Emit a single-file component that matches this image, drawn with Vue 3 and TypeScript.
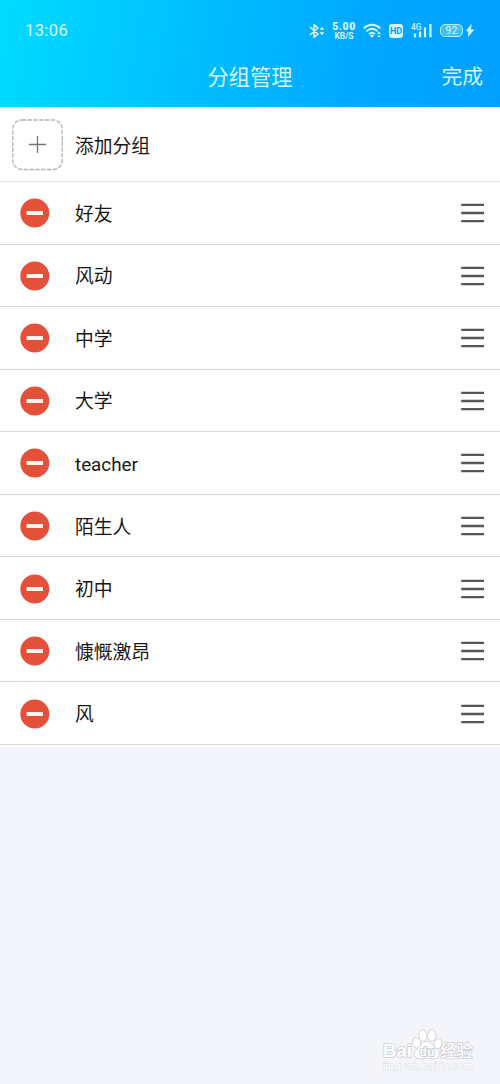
<script setup lang="ts">
interface Group {
  id: number
  name: string
}

const groups: Group[] = [
  '好友', '风动', '中学', '大学', 'teacher', '陌生人', '初中', '慷慨激昂', '风',
].map((name, id) => ({ id, name }))
</script>

<template>
  <main class="screen">
    <header class="header">
      <div class="status">
        <span class="clock">13:06</span>
        <div class="indicators">
          <svg class="bluetooth" width="17" height="16" viewBox="0 0 17 16">
            <path d="M1 4.2 9 11 5.1 14.3V1.7L9 5 1 11.8" fill="none" stroke="currentColor" stroke-width="1.6" stroke-linejoin="round" />
            <path d="m13 3.8 2.3 2.9h-4.6zM13 12.2l2.3-2.900h-4.600z" fill="currentColor" />
          </svg>
          <span class="speed"><b>5.00</b><small>KB/S</small></span>
          <svg class="wifi" width="20" height="16" viewBox="0 0 20 16">
            <path d="M.7 5.300Q9 -1.700 17.300 5.300M3.400 8.200Q9 3.500 14.600 8.200M6 11Q9 8.500 12 11" fill="none" stroke="currentColor" stroke-width="1.9" />
            <path d="M6.800 12.400Q9 11 11.200 12.400L9 14.800zM16 8.500l2 2.400h-4zM16 14.800l2-2.400h-4z" fill="currentColor" />
          </svg>
          <span class="hd">HD</span>
          <svg class="signal" width="22" height="17" viewBox="0 0 22 17">
            <text x="0" y="7.600" class="network" textLength="10.500" lengthAdjust="spacingAndGlyphs">4G</text>
            <path d="M4 11.500v3.700M9 9.500v5.700M14 5.500v9.700M19.400 2v13.200" fill="none" stroke="currentColor" stroke-width="2.200" />
          </svg>
          <span class="battery">92</span>
          <svg class="bolt" width="10" height="15" viewBox="0 0 10 15">
            <path d="M6.500.7.600 8.200h3L2.800 14.300 9.400 6.400H6z" fill="currentColor" />
          </svg>
        </div>
      </div>
      <nav class="titlebar">
        <span />
        <h1>分组管理</h1>
        <button type="button">完成</button>
      </nav>
    </header>

    <section class="add">
      <svg class="add-icon" width="52" height="52" viewBox="0 0 52 52">
        <rect x=".8" y="1" width="49.400" height="49.500" rx="9" fill="none" stroke="#b4b4b4" stroke-width="1.300" stroke-dasharray="4.400 1.400" />
        <path d="M17 25.500h17M25.500 17v17" stroke="#777" stroke-width="1.300" />
      </svg>
      <span>添加分组</span>
    </section>

    <ul class="groups">
      <li v-for="group in groups" :key="group.id">
        <svg class="remove" width="30" height="30" viewBox="0 0 30 30">
          <circle cx="14.800" cy="15" r="14.500" fill="#e5503a" />
          <rect x="6.600" y="13" width="16.400" height="4" fill="#fff5ed" />
        </svg>
        <span class="name">{{ group.name }}</span>
        <svg class="drag" width="24" height="20" viewBox="0 0 24 20">
          <path d="M1.200 1.800h22.800M1.200 10h22.800M1.200 18.200h22.800" stroke="#565656" stroke-width="2.300" />
        </svg>
      </li>
    </ul>

    <footer class="rest">
      <svg width="94" height="48" viewBox="0 0 94 48">
        <g class="logo">
          <text x="1" y="29.500" class="latin" textLength="29" lengthAdjust="spacingAndGlyphs">Bai</text>
          <g>
            <ellipse cx="34.500" cy="16" rx="3.700" ry="4.800" transform="rotate(-15 34.500 16)" />
            <ellipse cx="40.800" cy="8.500" rx="3.700" ry="5.200" />
            <ellipse cx="49.800" cy="8.500" rx="3.700" ry="5.200" transform="rotate(8 49.800 8.500)" />
            <ellipse cx="55.800" cy="16.800" rx="3.500" ry="4.800" transform="rotate(15 55.800 16.800)" />
            <path d="M45 15c5 0 6.500 5 10 7.800 3.700 3.200 2 8.500-2.900 8.700-3.200.1-4.600-.7-7.100-.7s-4.200.9-7.300.7c-5-.2-6.400-5.500-2.700-8.900C38 20.300 40 15 45 15z" />
          </g>
          <text x="37.500" y="29" class="du" textLength="15" lengthAdjust="spacingAndGlyphs">du</text>
          <text x="58.500" y="29.500" class="cjk" textLength="32" lengthAdjust="spacingAndGlyphs">经验</text>
        </g>
        <text x="1" y="43" class="site" textLength="90" lengthAdjust="spacingAndGlyphs">jingyan.baidu.com</text>
      </svg>
    </footer>
  </main>
</template>

<style>
body {
  margin: 0;
}
</style>

<style scoped>
.screen {
  display: flex;
  flex-direction: column;
  width: 500px;
  height: 1084px;
  overflow: hidden;
  background: #fff;
  color: #171717;
  font-family: Roboto, "Noto Sans CJK SC", sans-serif;
}

.header {
  box-sizing: border-box;
  height: 107px;
  flex: none;
  background: linear-gradient(100deg, #00dcff 0%, #00bfff 38%, #00a8ff 72%, #00a0ff 100%);
  color: #d8f8ff;
}

.status {
  display: flex;
  justify-content: space-between;
  align-items: center;
  height: 46px;
  padding: 15px 25px 0 25px;
  box-sizing: border-box;
}

.clock {
  font-size: 16.500px;
  letter-spacing: 0.400px;
}

.indicators {
  display: flex;
  align-items: center;
}

.speed {
  display: flex;
  flex-direction: column;
  align-items: center;
  width: 24px;
  margin: 0 7px 0 6px;
  padding-top: 2px;
  font-weight: 700;
}

.speed b {
  font-size: 10.500px;
  line-height: 10px;
  letter-spacing: 0.500px;
}

.speed small {
  font-size: 8.500px;
  line-height: 9px;
}

.hd {
  width: 14px;
  height: 14px;
  margin: 0 8px 0 6px;
  border-radius: 3px;
  background: #d8f8ff;
  color: #00a3f5;
  font-size: 9px;
  font-weight: 700;
  line-height: 14px;
  text-align: center;
}

.network {
  fill: currentColor;
  font-size: 8.500px;
  font-weight: 500;
}

.battery {
  box-sizing: border-box;
  width: 23px;
  height: 13px;
  margin: 0 2px 0 7px;
  border: 1px solid #bdefff;
  border-radius: 5px;
  background: #45bdf5;
  font-size: 10.500px;
  line-height: 11px;
  text-align: center;
}

.titlebar {
  display: grid;
  grid-template-columns: 1fr auto 1fr;
  align-items: center;
  height: 58px;
  padding: 0 17px;
}

.titlebar h1 {
  margin: 0;
  font-size: 21.200px;
  font-weight: 400;
}

.titlebar button {
  justify-self: end;
  padding: 0;
  border: 0;
  background: none;
  color: inherit;
  font: inherit;
  font-size: 20.800px;
}

.add {
  display: flex;
  align-items: center;
  gap: 11px;
  box-sizing: border-box;
  height: 75px;
  flex: none;
  padding-left: 12px;
  border-bottom: 1px solid #e4e4e4;
  font-size: 18.800px;
}

.add-icon {
  margin-top: 2px;
}

.groups {
  margin: 0;
  padding: 0;
  list-style: none;
}

.groups li {
  display: flex;
  align-items: center;
  box-sizing: border-box;
  height: 62.550px;
  padding: 1px 16px 0 20px;
  border-bottom: 1px solid #d9d9d9;
  font-size: 18.800px;
}

.name {
  flex: 1;
  margin-left: 25px;
  padding-top: 3px;
  line-height: 28px;
}

.rest {
  display: flex;
  flex: 1;
  justify-content: flex-end;
  align-items: flex-end;
  margin-top: 2px;
  padding: 0 24px 9px 0;
  border-top-left-radius: 4px;
  background: #f4f5fb;
}

.logo {
  fill: #fff;
  stroke: #cfcfd4;
  stroke-width: 1.600px;
  paint-order: stroke;
}

.latin {
  font: 700 19px "Liberation Sans", sans-serif;
}

.du {
  stroke: #bfbfc5;
  font: 700 12.500px "Liberation Sans", sans-serif;
}

.cjk {
  font: 500 17px "Noto Sans CJK SC", sans-serif;
}

.site {
  fill: #fff;
  stroke: #dedfe4;
  stroke-width: 1px;
  paint-order: stroke;
  font: 400 11px "Liberation Sans", sans-serif;
}
</style>
